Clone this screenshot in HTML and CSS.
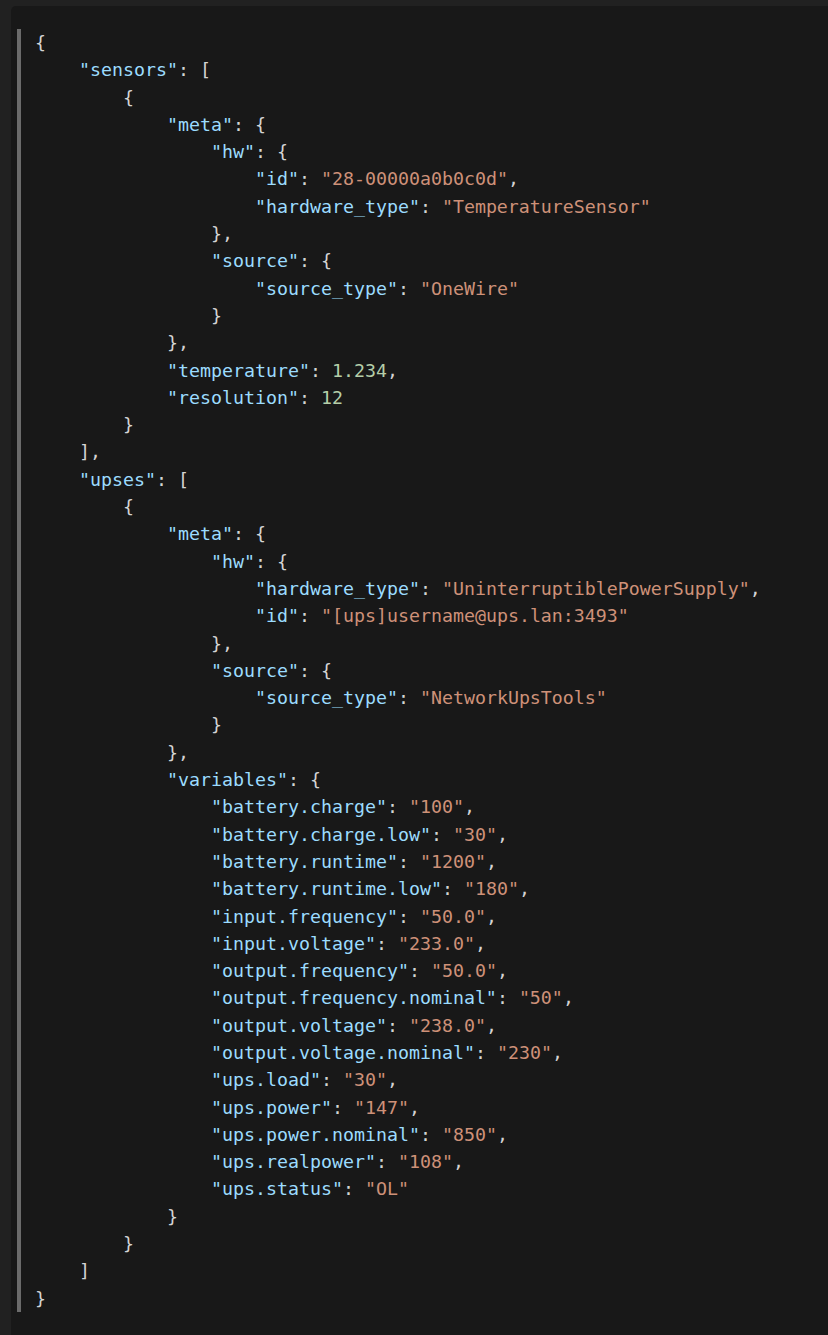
FILE: index.html
```html
<!DOCTYPE html>
<html>
<head>
<meta charset="utf-8">
<link rel="stylesheet" href="styles.css">
</head>
<body>
<div class="panel">
<pre class="code">{
    <span class="k">"sensors"</span>: [
        {
            <span class="k">"meta"</span>: {
                <span class="k">"hw"</span>: {
                    <span class="k">"id"</span>: <span class="s">"28-00000a0b0c0d"</span>,
                    <span class="k">"hardware_type"</span>: <span class="s">"TemperatureSensor"</span>
                },
                <span class="k">"source"</span>: {
                    <span class="k">"source_type"</span>: <span class="s">"OneWire"</span>
                }
            },
            <span class="k">"temperature"</span>: <span class="n">1.234</span>,
            <span class="k">"resolution"</span>: <span class="n">12</span>
        }
    ],
    <span class="k">"upses"</span>: [
        {
            <span class="k">"meta"</span>: {
                <span class="k">"hw"</span>: {
                    <span class="k">"hardware_type"</span>: <span class="s">"UninterruptiblePowerSupply"</span>,
                    <span class="k">"id"</span>: <span class="s">"[ups]username@ups.lan:3493"</span>
                },
                <span class="k">"source"</span>: {
                    <span class="k">"source_type"</span>: <span class="s">"NetworkUpsTools"</span>
                }
            },
            <span class="k">"variables"</span>: {
                <span class="k">"battery.charge"</span>: <span class="s">"100"</span>,
                <span class="k">"battery.charge.low"</span>: <span class="s">"30"</span>,
                <span class="k">"battery.runtime"</span>: <span class="s">"1200"</span>,
                <span class="k">"battery.runtime.low"</span>: <span class="s">"180"</span>,
                <span class="k">"input.frequency"</span>: <span class="s">"50.0"</span>,
                <span class="k">"input.voltage"</span>: <span class="s">"233.0"</span>,
                <span class="k">"output.frequency"</span>: <span class="s">"50.0"</span>,
                <span class="k">"output.frequency.nominal"</span>: <span class="s">"50"</span>,
                <span class="k">"output.voltage"</span>: <span class="s">"238.0"</span>,
                <span class="k">"output.voltage.nominal"</span>: <span class="s">"230"</span>,
                <span class="k">"ups.load"</span>: <span class="s">"30"</span>,
                <span class="k">"ups.power"</span>: <span class="s">"147"</span>,
                <span class="k">"ups.power.nominal"</span>: <span class="s">"850"</span>,
                <span class="k">"ups.realpower"</span>: <span class="s">"108"</span>,
                <span class="k">"ups.status"</span>: <span class="s">"OL"</span>
            }
        }
    ]
}</pre>
</div>
</body>
</html>
```

FILE: styles.css
```css
html, body {
  margin: 0;
  padding: 0;
  background: #212121;
}

body {
  display: flex;
  flex-direction: column;
  height: 100vh;
  padding: 6px 0 0 11px;
  box-sizing: border-box;
}

.panel {
  flex: 1;
  background: #181818;
  border-top-left-radius: 5px;
  padding: 23px 0 0 6px;
  box-sizing: border-box;
}

.code {
  margin: 0;
  border-left: 4px solid #6b6b6b;
  padding-left: 14px;
  font-family: "DejaVu Sans Mono", "Liberation Mono", monospace;
  font-size: 18.27px;
  line-height: 27.3px;
  color: #d4d4d4;
}

.k { color: #9cdcfe; }
.s { color: #ce9178; }
.n { color: #b5cea8; }
```
